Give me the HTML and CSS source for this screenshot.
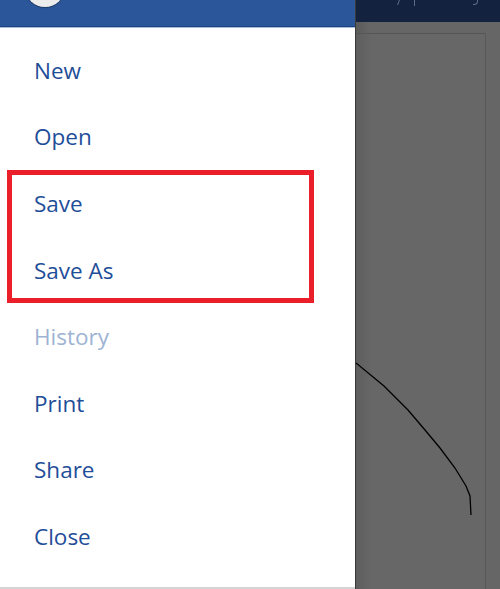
FILE: index.html
```html
<!DOCTYPE html>
<html>
<head>
<meta charset="utf-8">
<link rel="stylesheet" href="styles.css">
</head>
<body>
<div class="app">
  <aside class="panel">
    <header class="panel-head">
      <div class="avatar"></div>
    </header>
    <nav class="menu">
      <div class="item">New</div>
      <div class="item">Open</div>
      <div class="group">
        <div class="item">Save</div>
        <div class="item">Save As</div>
      </div>
      <div class="item disabled">History</div>
      <div class="item">Print</div>
      <div class="item">Share</div>
      <div class="item">Close</div>
    </nav>
    <div class="panel-foot"></div>
  </aside>
  <main class="work">
    <div class="topbar">
      <span class="glyph g1"></span>
      <span class="glyph g2"></span>
      <span class="glyph g3"></span>
    </div>
    <div class="canvas">
      <div class="page">
        <svg class="ink" width="130" height="560" viewBox="356 34 130 560">
          <path d="M356 363 L384 386 L408 410 L425 430 L440 448 L455 468 L466 486 L470 496 L471 515" fill="none" stroke="#000" stroke-width="1.3"/>
        </svg>
      </div>
    </div>
  </main>
</div>
</body>
</html>
```
FILE: styles.css
```css
html, body {
  margin: 0;
  padding: 0;
  width: 500px;
  height: 589px;
  overflow: hidden;
  background: #666666;
}
.app {
  display: flex;
  width: 500px;
  height: 589px;
}
.panel {
  width: 355px;
  flex: none;
  background: #ffffff;
  display: flex;
  flex-direction: column;
  border-right: 1px solid #3a3a3a;
}
.panel-head {
  position: relative;
  height: 26px;
  background: #2b579a;
  border-bottom: 1px solid #1b4585;
  box-shadow: 0 1px 0 #a8bcd8;
  overflow: hidden;
}
.avatar {
  position: absolute;
  left: 25px;
  top: -33px;
  width: 40px;
  height: 40px;
  border-radius: 50%;
  background: #ececec;
  box-shadow: 0 1px 1px rgba(0,0,0,0.35);
}
.menu {
  flex: 1;
  padding-top: 10px;
  display: flex;
  flex-direction: column;
  font-family: "Open Sans", "Noto Sans", sans-serif;
}
.group {
  margin: 0 41px 0 7px;
  outline: 5px solid #ea1f2a;
  outline-offset: -5px;
  padding: 0;
}
.group .item {
  padding-left: 27px;
}
.item {
  height: 66.6px;
  display: flex;
  align-items: center;
  padding-left: 34px;
  font-size: 22.5px;
  color: #1f4e99;
  letter-spacing: 0;
}
.item.disabled {
  color: #9db3d3;
}
.panel-foot {
  height: 2px;
  background: #d4d4d4;
}
.work {
  flex: 1;
  display: flex;
  flex-direction: column;
}
.topbar {
  position: relative;
  height: 22px;
  background: #13223f;
  flex: none;
}
.glyph {
  position: absolute;
  top: 0;
  width: 1px;
  background: #5d6c8a;
}
.g1 { left: 42px; height: 5px; transform: skewX(-20deg); }
.g2 { left: 58px; height: 6px; }
.g3 { left: 117px; height: 4px; width: 4px; background: none; border-bottom: 1px solid #5d6c8a; border-right: 1px solid #5d6c8a; border-radius: 0 0 4px 0; }
.canvas {
  flex: 1;
  padding-top: 11px;
  background: linear-gradient(to right, #5a5a5a 0px, #666666 14px);
}
.page {
  position: relative;
  width: 129px;
  height: 100%;
  border-top: 1px solid #555555;
  border-right: 1px solid #585858;
  background: linear-gradient(to right, #5e5e5e 0px, #676767 16px);
}
.ink {
  position: absolute;
  left: 0;
  top: 0;
}
```
